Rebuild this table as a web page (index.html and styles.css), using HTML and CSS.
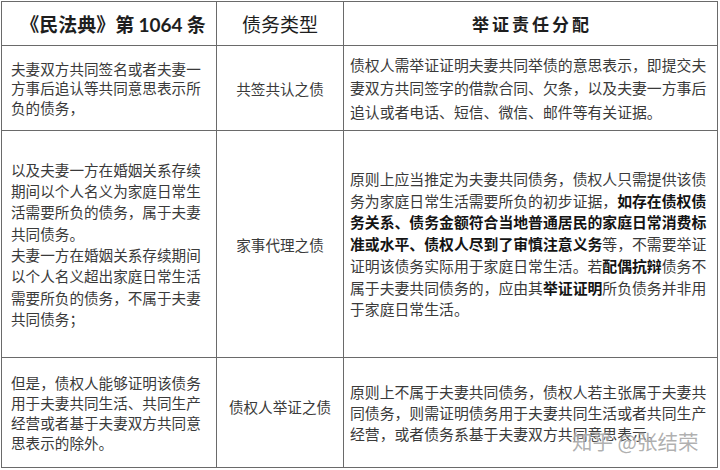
FILE: index.html
```html
<!DOCTYPE html>
<html lang="zh-CN">
<head>
<meta charset="utf-8">
<link rel="stylesheet" href="styles.css">
</head>
<body>
<div class="sheet">
  <div class="grid">
    <div class="cell head h1"><div class="txt">《民法典》第 <span class="num">1064</span> 条</div></div>
    <div class="cell head h2"><div class="txt">债务类型</div></div>
    <div class="cell head h3"><div class="txt">举证责任分配</div></div>

    <div class="cell law lh19"><div class="txt">夫妻双方共同签名或者夫妻一<br>方事后追认等共同意思表示所<br>负的债务，</div></div>
    <div class="cell kind"><div class="txt">共签共认之债</div></div>
    <div class="cell duty lh23"><div class="txt">债权人需举证证明夫妻共同举债的意思表示，即提交夫<br>妻双方共同签字的借款合同、欠条，以及夫妻一方事后<br>追认或者电话、短信、微信、邮件等有关证据。</div></div>

    <div class="cell law lh21"><div class="txt">以及夫妻一方在婚姻关系存续<br>期间以个人名义为家庭日常生<br>活需要所负的债务，属于夫妻<br>共同债务。<br>夫妻一方在婚姻关系存续期间<br>以个人名义超出家庭日常生活<br>需要所负的债务，不属于夫妻<br>共同债务；</div></div>
    <div class="cell kind"><div class="txt">家事代理之债</div></div>
    <div class="cell duty lh22"><div class="txt">原则上应当推定为夫妻共同债务，债权人只需提供该债<br>务为家庭日常生活需要所负的初步证据，<b>如存在债权债</b><br><b>务关系、债务金额符合当地普通居民的家庭日常消费标</b><br><b>准或水平、债权人尽到了审慎注意义务</b>等，不需要举证<br>证明该债务实际用于家庭日常生活。若<b>配偶抗辩</b>债务不<br>属于夫妻共同债务的，应由其<b>举证证明</b>所负债务并非用<br>于家庭日常生活。</div></div>

    <div class="cell law lh20"><div class="txt">但是，债权人能够证明该债务<br>用于夫妻共同生活、共同生产<br>经营或者基于夫妻双方共同意<br>思表示的除外。</div></div>
    <div class="cell kind kind-low"><div class="txt">债权人举证之债</div></div>
    <div class="cell duty lh21"><div class="txt">原则上不属于夫妻共同债务，债权人若主张属于夫妻共<br>同债务，则需证明债务用于夫妻共同生活或者共同生产<br>经营，或者债务系基于夫妻双方共同意思表示。</div></div>
  </div>
  <div class="watermark">知乎 @张结荣</div>
</div>
</body>
</html>
```

FILE: styles.css
```css
html, body {
  margin: 0;
  padding: 0;
  background: #ffffff;
}

body {
  font-family: "Noto Sans CJK SC", "Noto Sans", sans-serif;
  color: #3a3a3a;
}

.sheet {
  position: relative;
  width: 720px;
  height: 470px;
  padding: 1px 0 0 1px;
  box-sizing: border-box;
}

.grid {
  display: grid;
  grid-template-columns: 214px 126px 373px;
  grid-template-rows: 43px 84px 226px 109px;
  gap: 1px;
  padding: 1px;
  width: max-content;
  background: #6a6a6a;
}

.cell {
  background: #ffffff;
  display: flex;
  align-items: center;
  white-space: nowrap;
  box-sizing: border-box;
  overflow: hidden;
}

.head {
  justify-content: center;
  color: #1e1e1e;
}

.h1 {
  font-size: 19px;
  font-weight: 700;
  padding-left: 8px;
}

.h1 .num {
  font-family: Lato, "Open Sans", sans-serif;
  font-weight: 700;
}

.h2 {
  font-size: 19px;
  font-weight: 400;
}

.h3 {
  font-size: 17px;
  font-weight: 700;
  letter-spacing: 3px;
  padding-left: 3px;
}

.law {
  font-size: 14.6px;
  padding-left: 9px;
}

.kind {
  justify-content: center;
  font-size: 14.6px;
}

.kind-low {
  padding-bottom: 12px;
}

.duty {
  font-size: 14.85px;
  padding-left: 6px;
}

.duty b {
  font-weight: 700;
  color: #141414;
}

.lh19 { line-height: 19.3px; }
.lh20 { line-height: 20px; }
.lh21 { line-height: 21.3px; }
.lh22 { line-height: 21.8px; }
.lh23 { line-height: 23.5px; }

.watermark {
  position: absolute;
  left: 572px;
  top: 427px;
  font-size: 20.5px;
  line-height: 28px;
  color: rgba(150, 150, 150, 0.75);
  white-space: nowrap;
  text-shadow: 0 0 2px rgba(255, 255, 255, 0.9);
}
```
